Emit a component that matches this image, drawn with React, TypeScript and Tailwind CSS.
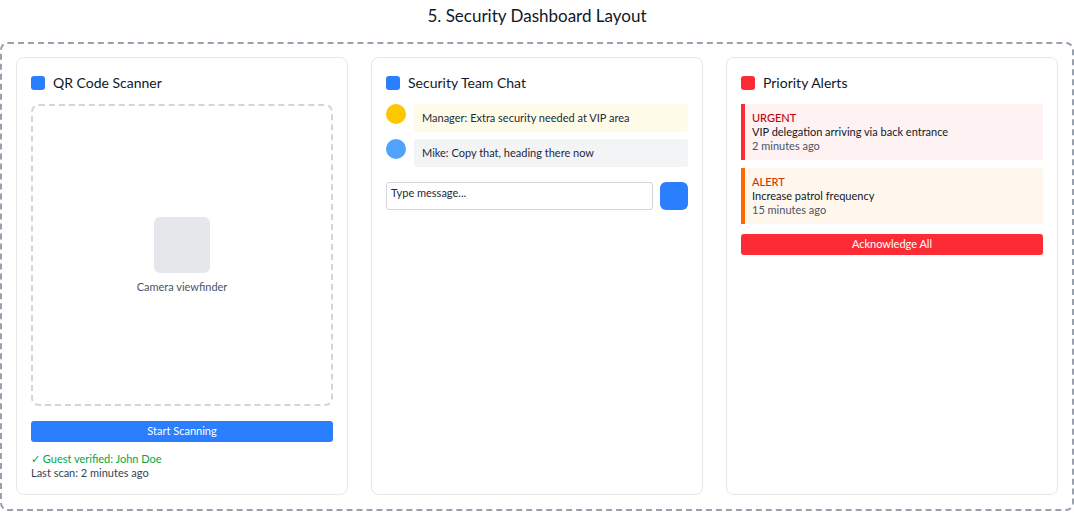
const font = { fontFamily: 'Lato, "Noto Sans", sans-serif' };

function CardTitle({ color, title }: { color: string; title: string }) {
  return (
    <div className="flex items-center gap-2 h-[21px] mb-[11px]">
      <span className={`w-3.5 h-3.5 rounded-[3px] ${color}`}></span>
      <span className="text-[14px] text-gray-900">{title}</span>
    </div>
  );
}

const messages = [
  { avatar: 'bg-yellow-400', bubble: 'bg-yellow-50', text: 'Manager: Extra security needed at VIP area' },
  { avatar: 'bg-blue-400', bubble: 'bg-gray-100', text: 'Mike: Copy that, heading there now' },
];

const alerts = [
  {
    label: 'URGENT',
    text: 'VIP delegation arriving via back entrance',
    time: '2 minutes ago',
    box: 'bg-red-50 border-red-500',
    labelColor: 'text-red-700',
  },
  {
    label: 'ALERT',
    text: 'Increase patrol frequency',
    time: '15 minutes ago',
    box: 'bg-orange-50 border-orange-500',
    labelColor: 'text-orange-700',
  },
];

export default function App() {
  return (
    <div className="bg-white text-gray-900 w-[1074px] h-[513px]" style={font}>
      {/* Title */}
      <div className="h-8 mb-2.5 flex items-center justify-center text-[17px] text-gray-900">
        5. Security Dashboard Layout
      </div>

      {/* Dashed frame */}
      <div className="border-2 border-dashed border-gray-400 rounded-lg px-3.5 pt-[13px] pb-3.5 grid grid-cols-3 gap-[23px]">
        {/* QR scanner */}
        <div className="bg-white border border-gray-200 rounded-lg p-3.5 flex flex-col">
          <CardTitle color="bg-blue-500" title="QR Code Scanner" />
          <div className="h-[302px] border-2 border-dashed border-gray-300 rounded-lg flex flex-col items-center justify-center">
            <div className="w-14 h-14 bg-gray-200 rounded-md"></div>
            <p className="mt-[7px] text-[11px] leading-[14px] text-gray-600">Camera viewfinder</p>
          </div>
          <button className="mt-[15px] h-[21px] w-full bg-blue-500 text-white text-[11px] rounded-[3px] flex items-center justify-center">
            Start Scanning
          </button>
          <div className="mt-2.5 text-[11px] leading-[14px]">
            <p className="text-green-600">✓ Guest verified: John Doe</p>
            <p className="text-gray-700">Last scan: 2 minutes ago</p>
          </div>
        </div>

        {/* Chat */}
        <div className="bg-white border border-gray-200 rounded-lg p-3.5 flex flex-col">
          <CardTitle color="bg-blue-500" title="Security Team Chat" />
          <div className="flex flex-col gap-[7px]">
            {messages.map((m) => (
              <div key={m.text} className="flex items-start gap-2">
                <span className={`w-5 h-5 rounded-full shrink-0 ${m.avatar}`}></span>
                <div className={`flex-1 rounded-[3px] px-2 py-[7px] text-[11px] leading-[14px] text-gray-800 ${m.bubble}`}>
                  {m.text}
                </div>
              </div>
            ))}
          </div>
          <div className="mt-[15px] flex gap-[7px]">
            <div className="flex-1 h-7 border border-gray-300 rounded-[3px] px-[4px] py-[3px] text-[11px] leading-[14px] text-gray-800">
              Type message...
            </div>
            <button className="w-7 h-7 bg-blue-500 rounded-md"></button>
          </div>
        </div>

        {/* Alerts */}
        <div className="bg-white border border-gray-200 rounded-lg p-3.5 flex flex-col">
          <CardTitle color="bg-red-500" title="Priority Alerts" />
          <div className="flex flex-col gap-2">
            {alerts.map((a) => (
              <div key={a.label} className={`border-l-4 pl-[7px] py-[7px] text-[11px] leading-[14px] ${a.box}`}>
                <p className={`font-medium ${a.labelColor}`}>{a.label}</p>
                <p className="text-gray-900">{a.text}</p>
                <p className="text-gray-600">{a.time}</p>
              </div>
            ))}
          </div>
          <button className="mt-2.5 h-[21px] w-full bg-red-500 text-white text-[11px] rounded-[3px] flex items-center justify-center">
            Acknowledge All
          </button>
        </div>
      </div>
    </div>
  );
}
